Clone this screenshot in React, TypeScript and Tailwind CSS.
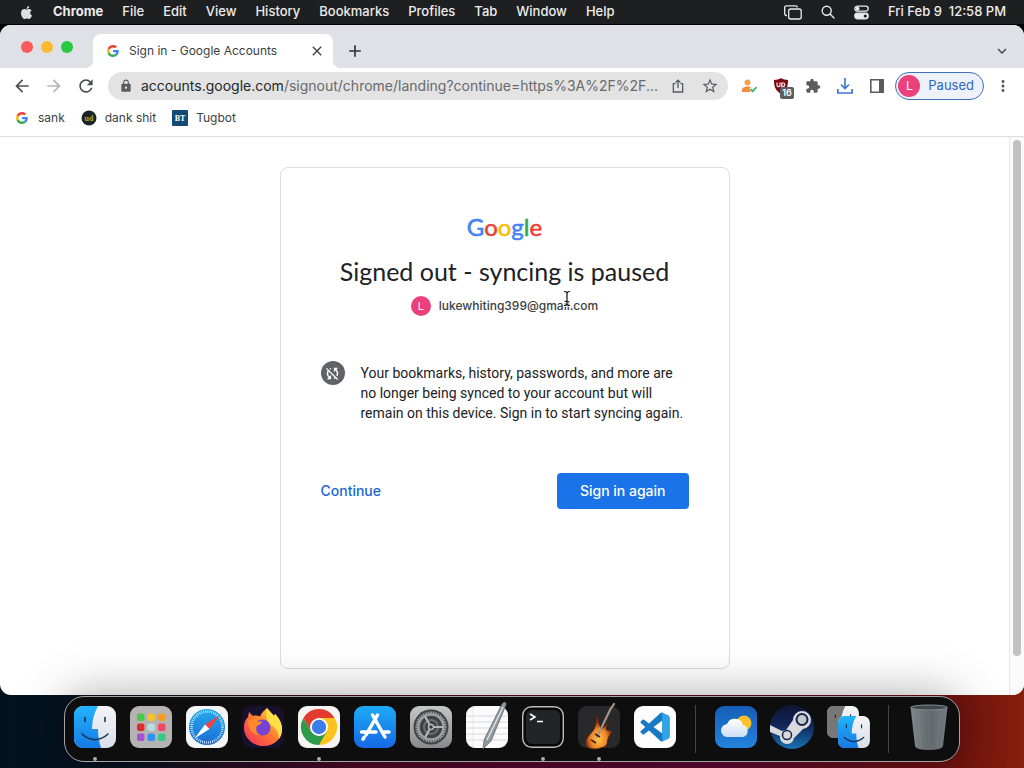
import type { ReactNode } from 'react'
import { FaApple } from 'react-icons/fa'
import {
  MdAdd,
  MdArrowBack,
  MdArrowForward,
  MdClose,
  MdExtension,
  MdKeyboardArrowDown,
  MdLock,
  MdMoreVert,
  MdRefresh,
  MdStarBorder,
  MdSyncDisabled,
} from 'react-icons/md'

const MENUS = ['File', 'Edit', 'View', 'History', 'Bookmarks', 'Profiles', 'Tab', 'Window', 'Help']

function GoogleG({ className }: { className?: string }) {
  return (
    <svg className={className} viewBox="0 0 48 48">
      <path fill="#EA4335" d="M24 9.5c3.54 0 6.71 1.22 9.21 3.6l6.85-6.85C35.9 2.38 30.47 0 24 0 14.62 0 6.51 5.38 2.56 13.22l7.98 6.19C12.43 13.72 17.74 9.5 24 9.5z" />
      <path fill="#4285F4" d="M46.98 24.55c0-1.57-.15-3.09-.38-4.55H24v9.02h12.94c-.58 2.96-2.26 5.48-4.78 7.18l7.73 6c4.51-4.18 7.09-10.36 7.09-17.65z" />
      <path fill="#FBBC05" d="M10.53 28.59c-.48-1.45-.76-2.99-.76-4.59s.27-3.14.76-4.59l-7.98-6.19C.92 16.46 0 20.12 0 24c0 3.88.92 7.54 2.56 10.78l7.97-6.19z" />
      <path fill="#34A853" d="M24 48c6.48 0 11.93-2.13 15.89-5.81l-7.73-6c-2.15 1.45-4.92 2.3-8.16 2.3-6.26 0-11.57-4.22-13.47-9.91l-7.98 6.19C6.51 42.62 14.62 48 24 48z" />
    </svg>
  )
}

function MenuBar() {
  return (
    <header className="flex h-[25px] shrink-0 items-center border-b border-black bg-[#1e1f21] pl-[19px] pr-[18px] text-[13px] font-medium text-[#ececec]">
      <button aria-label="Apple menu" className="mr-[19px] text-[#dedede]">
        <FaApple className="size-[15px]" />
      </button>
      <nav className="flex flex-1 items-center gap-[19px]">
        <button className="font-bold">Chrome</button>
        {MENUS.map((m) => (
          <button key={m}>{m}</button>
        ))}
      </nav>
      <div className="flex items-center gap-[19px]">
        <button aria-label="Stage Manager">
          <svg className="h-[15px] w-[18px]" viewBox="0 0 18 15" fill="none" stroke="currentColor" strokeWidth="1.3">
            <path d="M3 10.5H2.5A1.8 1.8 0 0 1 .7 8.7V2.6A1.8 1.8 0 0 1 2.5.8h9A1.8 1.8 0 0 1 13.3 2.6" />
            <rect x="4.7" y="4" width="12.5" height="10" rx="2" />
          </svg>
        </button>
        <button aria-label="Spotlight">
          <svg className="size-[14px]" viewBox="0 0 14 14" fill="none" stroke="currentColor" strokeWidth="1.4">
            <circle cx="5.7" cy="5.7" r="4.5" />
            <path d="M9 9l4 4" strokeLinecap="round" />
          </svg>
        </button>
        <button aria-label="Control Center">
          <svg className="size-[15px]" viewBox="0 0 15 15" fill="none" stroke="currentColor" strokeWidth="1.3">
            <rect x=".8" y="1.2" width="13.4" height="5" rx="2.5" />
            <circle cx="3.6" cy="3.7" r="1.3" fill="currentColor" />
            <rect x=".8" y="8.2" width="13.4" height="5.6" rx="2.8" fill="currentColor" />
            <circle cx="11.3" cy="11" r="1.6" fill="#1e1f21" stroke="none" />
          </svg>
        </button>
        <time className="whitespace-pre">Fri Feb 9  12:58 PM</time>
      </div>
    </header>
  )
}

function TabStrip() {
  return (
    <div className="flex h-[43px] shrink-0 items-end bg-[#dee1e6] pl-[21px] pr-[13px]">
      <div className="flex h-full items-center gap-2 pr-5">
        <button aria-label="Close window" className="size-3 rounded-full bg-[#fb5b5a]" />
        <button aria-label="Minimize window" className="size-3 rounded-full bg-[#fcbb2e]" />
        <button aria-label="Zoom window" className="size-3 rounded-full bg-[#29c840]" />
      </div>
      <div className="relative flex h-[34px] w-60 items-center rounded-t-lg bg-white pl-[14px] pr-2 text-xs text-[#3c4043] before:absolute before:bottom-0 before:-left-2 before:size-2 before:bg-[radial-gradient(circle_at_0_0,transparent_8px,white_8px)] after:absolute after:bottom-0 after:-right-2 after:size-2 after:bg-[radial-gradient(circle_at_100%_0,transparent_8px,white_8px)]">
        <GoogleG className="mr-[10px] size-3" />
        <span className="flex-1 whitespace-nowrap">Sign in - Google Accounts</span>
        <button aria-label="Close tab">
          <MdClose className="size-4" />
        </button>
      </div>
      <button aria-label="New tab" className="ml-3 flex h-[34px] items-center text-[#303236]">
        <MdAdd className="size-5" />
      </button>
      <button aria-label="Search tabs" className="ml-auto flex h-[34px] items-center text-[#45484c]">
        <MdKeyboardArrowDown className="size-[18px]" />
      </button>
    </div>
  )
}

function Toolbar() {
  return (
    <div className="flex h-9 shrink-0 items-center bg-white px-3 text-[#5a5c60]">
      <div className="flex items-center gap-3">
        <button aria-label="Back"><MdArrowBack className="size-5 text-[#4e5054]" /></button>
        <button aria-label="Forward"><MdArrowForward className="size-5 text-[#b5b6b8]" /></button>
        <button aria-label="Reload"><MdRefresh className="size-5 text-[#4e5054]" /></button>
      </div>
      <div className="ml-3 flex h-7 min-w-0 flex-1 items-center rounded-full bg-[#e3e3e3] pl-[11px] pr-[9px] text-sm">
        <MdLock className="mr-2 size-[14px] shrink-0" />
        <label htmlFor="address" className="text-[#25272a]">accounts.google.com</label>
        <input
          id="address"
          type="text"
          className="min-w-0 flex-1 bg-transparent text-[#68696c] outline-none"
          defaultValue="/signout/chrome/landing?continue=https%3A%2F%2F..."
        />
        <button aria-label="Share this page" className="ml-3">
          <svg className="size-[14px]" viewBox="0 0 14 14" fill="none" stroke="currentColor" strokeWidth="1.3">
            <path d="M4.5 4.7H2.3V13H11.7V4.7H9.5M7 9V1.2M4.6 3.5L7 1.1l2.4 2.4" />
          </svg>
        </button>
        <button aria-label="Bookmark this tab" className="ml-4">
          <MdStarBorder className="size-[18px]" />
        </button>
      </div>
      <div className="ml-[13px] flex items-center gap-4">
        <button aria-label="Account extension">
          <svg className="size-4" viewBox="0 0 16 16">
            <circle cx="6.5" cy="4.5" r="3" fill="#f8a04f" />
            <path fill="#f28a3c" d="M1 14v-2c0-2 2-3.500 5.500-3.500 1.500 0 2.500.3 3.500.8L8.500 11l1.500 3z" />
            <path d="M9.500 11l2.200 2.300L15.500 9" fill="none" stroke="#2eb45a" strokeWidth="1.700" />
          </svg>
        </button>
        <button aria-label="uBlock Origin, 16 blocked" className="relative size-4">
          <svg className="size-4" viewBox="0 0 16 16">
            <path fill="#800611" d="M8 0c2 1.400 4.500 1.900 7 2 0 6.500-1 10-7 14C2 12 1 8.500 1 2 3.500 1.900 6 1.400 8 0z" />
            <path fill="none" stroke="#fff" strokeWidth="1.1" d="M4 4.5v2.7a1.5 1.5 0 0 0 3 0V4.5M8.8 10V5h1.4a1.6 1.6 0 0 1 0 3.3H8.8" />
          </svg>
          <span className="absolute left-[7px] top-[9px] rounded-xs bg-[#5c5d60] px-[2px] text-[9px] font-semibold leading-[12px] text-white">16</span>
        </button>
        <button aria-label="Extensions"><MdExtension className="size-4" /></button>
        <button aria-label="Downloads" className="text-[#3f79d8]">
          <svg className="size-4" viewBox="0 0 16 16" fill="none" stroke="currentColor" strokeWidth="1.7">
            <path d="M8 0v10M4 6.5l4 4 4-4M.9 11v4h14.2v-4" />
          </svg>
        </button>
        <button aria-label="Side panel">
          <svg className="size-4" viewBox="0 0 16 16">
            <path fill="currentColor" fillRule="evenodd" d="M1 1h14v14H1zM2.6 2.6v10.8H10V2.6z" />
          </svg>
        </button>
      </div>
      <button className="ml-[10px] flex h-7 items-center gap-2 rounded-full border border-[#3f70b8] bg-[#edf2fa] pl-[2px] pr-[9px] text-[13px] text-[#2f67c0]">
        <span className="flex size-[22px] items-center justify-center rounded-full bg-[#ec407a] text-xs text-white">L</span>
        Paused
      </button>
      <button aria-label="Chrome menu" className="ml-[10px]"><MdMoreVert className="size-[18px]" /></button>
    </div>
  )
}

function Bookmarks() {
  return (
    <nav className="flex h-[33px] shrink-0 items-start gap-4 border-b border-[#dddee0] bg-white pl-4 pt-[5px] text-xs text-[#3c4043]">
      <a href="#sank" className="flex h-[18px] items-center gap-[10px]">
        <GoogleG className="size-3" />
        sank
      </a>
      <a href="#dank" className="flex h-[18px] items-center gap-2">
        <svg className="size-4" viewBox="0 0 16 16">
          <circle cx="8" cy="8" r="7.500" fill="#1b2426" />
          <text x="8" y="11" textAnchor="middle" fontSize="8" fontWeight="700" fill="#a8b02e" fontFamily="Liberation Serif, serif">ud</text>
        </svg>
        dank shit
      </a>
      <a href="#tugbot" className="flex h-[18px] items-center gap-2">
        <svg className="size-4" viewBox="0 0 16 16">
          <rect width="16" height="16" rx="1" fill="#134b74" />
          <text x="8" y="11" textAnchor="middle" fontSize="8" fontWeight="700" fill="#fff" fontFamily="Liberation Serif, serif">BT</text>
        </svg>
        Tugbot
      </a>
    </nav>
  )
}

function TextCursor() {
  return (
    <svg className="absolute right-[26px] -top-1.5 h-[17px] w-[10px]" viewBox="0 0 10 17" fill="none">
      <path stroke="#fff" strokeWidth="3" d="M2 1.5q3 0 3 2v10q0 2-3 2M8 1.5q-3 0-3 2v10q0 2 3 2" />
      <path stroke="#111" strokeWidth="1.2" d="M2 1.5q3 0 3 2v10q0 2-3 2M8 1.5q-3 0-3 2v10q0 2 3 2M3 11.5h4" />
    </svg>
  )
}

function SignedOutCard() {
  return (
    <section className="mx-auto mt-[30px] flex h-[502px] w-full max-w-[450px] shrink-0 flex-col rounded-lg border border-[#dadce0] px-10 pt-[43px] text-[#202124]">
      <div aria-label="Google" className="text-center font-['Lato',sans-serif] text-2xl leading-8 [-webkit-text-stroke:0.6px]">
        <span className="text-[#4285f4]">G</span>
        <span className="text-[#ea4335]">o</span>
        <span className="text-[#fbbc05]">o</span>
        <span className="text-[#4285f4]">g</span>
        <span className="text-[#34a853]">l</span>
        <span className="text-[#ea4335]">e</span>
      </div>
      <h1 className="mt-3 text-center font-['Lato',sans-serif] text-[25px] leading-8 whitespace-nowrap">Signed out - syncing is paused</h1>
      <div className="mt-[9px] flex items-center justify-center gap-2">
        <span className="flex size-5 items-center justify-center rounded-full bg-[#ec407a] text-[11px] text-white">L</span>
        <span className="relative text-xs font-medium leading-5 text-[#3c4043]">
          lukewhiting399@gmail.com
          <TextCursor />
        </span>
      </div>
      <div className="mt-[45px] flex items-start gap-4">
        <span className="flex size-6 shrink-0 items-center justify-center rounded-full bg-[#5f6368] text-white">
          <MdSyncDisabled className="size-[17px]" />
        </span>
        <p className="pt-0.5 font-['Roboto',sans-serif] text-sm leading-5">
          Your bookmarks, history, passwords, and more are no longer being synced to your account but will remain on this device. Sign in to start syncing again.
        </p>
      </div>
      <div className="mt-[50px] flex items-center justify-between text-sm font-medium">
        <button className="text-[#1a66d0]">Continue</button>
        <button className="h-9 rounded bg-[#1a73e8] px-[23px] text-white">Sign in again</button>
      </div>
    </section>
  )
}

function FinderFace() {
  return (
    <>
      <rect width="42" height="42" rx="9" fill="url(#finderLight)" />
      <path fill="url(#finderBlue)" d="M9 0h15c-4 7-6 15-6 23h6c0 7 1 13 3 19H9a9 9 0 0 1-9-9V9a9 9 0 0 1 9-9z" />
      <path d="M11 11.5v4M31 11.5v4" stroke="#173450" strokeWidth="1.6" strokeLinecap="round" />
      <path d="M8 28c8 7.500 18 7.500 26 0" fill="none" stroke="#173450" strokeWidth="1.5" strokeLinecap="round" />
    </>
  )
}

const LAUNCHPAD = ['#45ca49', '#f6c12f', '#f59c24', '#dc2c2e', '#b9dcdc', '#ef4967', '#a451d3', '#2d93ee', '#38c987']

const GEAR_TEETH = Array.from({ length: 36 }, (_, i) => i * 10)

interface DockApp {
  name: string
  running?: boolean
  icon: ReactNode
}

const APPS: DockApp[] = [
  { name: 'Finder', running: true, icon: <FinderFace /> },
  {
    name: 'Launchpad',
    icon: (
      <>
        <rect width="42" height="42" rx="9" fill="#b4b2b3" />
        {LAUNCHPAD.map((c, i) => (
          <rect key={c} x={7 + (i % 3) * 10.5} y={7.5 + Math.floor(i / 3) * 10} width="7.5" height="7.5" rx="2" fill={c} />
        ))}
      </>
    ),
  },
  {
    name: 'Safari',
    icon: (
      <>
        <rect width="42" height="42" rx="9" fill="#f4f5f6" />
        <circle cx="21" cy="21" r="18" fill="url(#safari)" />
        <circle cx="21" cy="21" r="15.5" fill="none" stroke="#fff" strokeWidth="2.5" strokeDasharray=".7 1.33" />
        <path fill="#f5413b" d="M33.5 9.5 19 18.5l4.5 4.5z" />
        <path fill="#fff" d="M8.5 32.5 19 18.5l4.5 4.5z" />
      </>
    ),
  },
  {
    name: 'Firefox',
    icon: (
      <>
        <rect width="42" height="42" rx="9" fill="#17102e" />
        <path
          fill="url(#firefox)"
          d="M25 2c2 3 5 5 7 8l1-2c4 4 7 9 7 15 0 10-8 17-18.500 17C11 40 2 32 2 22c0-5 1-8 4-11l1-5 4 4c2-.8 5-.5 7 .5 1-3 4-6 7-8.500z"
        />
        <path fill="#ffdf46" d="M25 2c2 3 5 5 7 8l1-2c4 4 7 9 7 15 0 4-1 7-3 10 0-8-4-11-8-14s-6-9-4-17z" />
        <circle cx="20.5" cy="21.500" r="8" fill="#7542d6" />
        <path fill="#ff8a2b" d="M6 15c4-3 8-4 12-3-2 1-3 2-3 3.500h5c0 2-3 3-5 4.500-2 4 0 8 4 9-8 1-13-6-13-14z" />
      </>
    ),
  },
  {
    name: 'Google Chrome',
    running: true,
    icon: (
      <>
        <rect width="42" height="42" rx="9" fill="#f5f4f2" />
        <path fill="#e33b2e" d="M21 21 5.400 12A18 18 0 0 1 36.600 12z" />
        <path fill="#fcc31e" d="M21 21V12h15.600A18 18 0 0 1 21 39z" />
        <path fill="#2c9c4b" d="M21 39A18 18 0 0 1 5.400 12l7.800 13.500L21 30l7.800-4.500z" />
        <path fill="#e33b2e" d="m5.400 12 7.800 13.500L21 21V12z" />
        <circle cx="21" cy="21" r="9" fill="#fff" />
        <circle cx="21" cy="21" r="7.2" fill="#3b7de9" />
      </>
    ),
  },
  {
    name: 'App Store',
    icon: (
      <>
        <rect width="42" height="42" rx="9" fill="url(#appStore)" />
        <path d="M23.5 9 12 29M18.5 9 31 31M7.5 26H22M29 26h6M10 31.5l-1 1.7" fill="none" stroke="#fff" strokeWidth="3.5" strokeLinecap="round" />
      </>
    ),
  },
  {
    name: 'System Settings',
    icon: (
      <>
        <rect width="42" height="42" rx="9" fill="url(#settings)" />
        <circle cx="21" cy="21" r="17.5" fill="#3f4243" />
        {GEAR_TEETH.map((a) => (
          <path key={a} d="M21 5.5v2" stroke="#a5aaaa" strokeWidth="1.5" transform={`rotate(${a} 21 21)`} />
        ))}
        <circle cx="21" cy="21" r="12.5" fill="none" stroke="#9ca1a1" strokeWidth="2.5" />
        <circle cx="21" cy="21" r="7" fill="none" stroke="#6a6f70" strokeWidth="2" />
        <path d="M21 21h12M21 21l-6-10.5M21 21l-6 10.5" stroke="#b2b6b6" strokeWidth="2.2" />
        <circle cx="21" cy="21" r="2.500" fill="#35383a" stroke="#b2b6b6" strokeWidth="1.5" />
      </>
    ),
  },
  {
    name: 'TextEdit',
    icon: (
      <>
        <rect width="42" height="42" rx="9" fill="#fbfbfb" />
        <path d="M0 10h42M0 16h42M0 22h42M0 28h42M0 34h42" stroke="#ccd0d3" strokeWidth=".8" />
        <path d="M7 0v42" stroke="#e7dfd8" strokeWidth=".7" />
        <path fill="#90999f" stroke="#555c61" strokeWidth=".7" d="M36-2c2-3 5-2 4 1L25 35l-8 8 1-9z" />
        <path d="M37 1 21 34" stroke="#e4e8ea" strokeWidth="1.3" />
      </>
    ),
  },
  {
    name: 'Terminal',
    running: true,
    icon: (
      <>
        <rect x=".7" y=".7" width="40.6" height="40.6" rx="9" fill="#080808" stroke="#bcbcbc" strokeWidth="1.4" />
        <rect x="4" y="4" width="34" height="34" rx="6" fill="#222425" />
        <path d="m8 8 5 3-5 3M15 15.5h6" fill="none" stroke="#fff" strokeWidth="1.6" />
      </>
    ),
  },
  {
    name: 'GarageBand',
    running: true,
    icon: (
      <>
        <rect width="42" height="42" rx="9" fill="#29282a" />
        <path fill="url(#guitar)" stroke="#47200f" strokeWidth=".8" d="M20 9c-3 3-1 9-4 14-2 4-6 6-8 11-2 6 2 9 8 9 5 0 6-1 10-2 4-2 3-5 4-8 1-4 4-5 4-9-2 1-6 1-6-2l3-6-7 7c-3-3-4-9-4-14z" />
        <path d="M19 31 32 4l4-6" stroke="#a89488" strokeWidth="2.2" fill="none" strokeLinecap="round" />
        <path d="m13 34 5 3M17 28l5 3" stroke="#45200e" strokeWidth="1.5" />
      </>
    ),
  },
  {
    name: 'Visual Studio Code',
    icon: (
      <>
        <rect width="42" height="42" rx="9" fill="#fdfdfd" />
        <g transform="translate(6.5 6.5) scale(1.21)">
          <path fill="#1879c4" d="M23.15 2.587 18.21.21a1.494 1.494 0 0 0-1.705.29l-9.46 8.63-4.12-3.128a.999.999 0 0 0-1.276.057L.327 7.261A1 1 0 0 0 .326 8.74L3.899 12 .326 15.26a1 1 0 0 0 .001 1.479L1.65 17.94a.999.999 0 0 0 1.276.057l4.12-3.128 9.46 8.63a1.492 1.492 0 0 0 1.704.29l4.942-2.377A1.5 1.5 0 0 0 24 20.06V3.939a1.5 1.5 0 0 0-.85-1.352zm-5.146 14.861L10.826 12l7.178-5.448v10.896z" />
          <path fill="#33a3e8" d="M18 .2 23.15 2.6a1.5 1.5 0 0 1 .85 1.35v16.1a1.5 1.5 0 0 1-.85 1.35L18 23.8z" />
        </g>
      </>
    ),
  },
]

const RECENTS: DockApp[] = [
  {
    name: 'Weather',
    icon: (
      <>
        <rect width="42" height="42" rx="9" fill="url(#weather)" />
        <circle cx="29" cy="17" r="7.5" fill="#fcc02c" />
        <path fill="url(#cloud)" d="M13 31a6.500 6.500 0 0 1-1-13 8.500 8.500 0 0 1 16 1 6.200 6.200 0 0 1 0 12z" />
      </>
    ),
  },
  {
    name: 'Steam',
    icon: (
      <>
        <circle cx="21" cy="21" r="22" fill="url(#steam)" />
        <path fill="#d8dade" d="M-1 19v7l10 4a7 7 0 0 0 14 2l9-9a9 9 0 1 0-10-9l-7 10-4 1z" />
        <circle cx="31" cy="13.5" r="5.5" fill="#c4c7cd" stroke="#172349" strokeWidth="2" />
        <circle cx="16" cy="29" r="4.5" fill="none" stroke="#172349" strokeWidth="1.5" />
      </>
    ),
  },
  {
    name: 'Migration Assistant',
    icon: (
      <>
        <g transform="scale(.76)">
          <FinderFace />
          <path fill="#777" d="M9 0h15c-4 7-6 15-6 23h6c0 7 1 13 3 19H9a9 9 0 0 1-9-9V9a9 9 0 0 1 9-9z" />
          <path d="M11 11.500v4" stroke="#222" strokeWidth="1.600" />
        </g>
        <g transform="translate(11 10) scale(.76)"><FinderFace /></g>
      </>
    ),
  },
]

const TRASH: DockApp = {
  name: 'Trash',
  icon: (
    <>
      <path fill="url(#trash)" d="M2.5 1h37L35 40q-1 4-14 4T7 40z" />
      <ellipse cx="21" cy="1.5" rx="18.5" ry="2.5" fill="#41474a" stroke="#858b8e" strokeWidth="1" />
      <path d="M10 6l3 35M32 6l-3 35M21 6v36" stroke="#91989b" strokeWidth=".6" opacity=".4" />
    </>
  ),
}

// Shared by every dock icon, so the ids stay unique on the page
function Gradients() {
  return (
    <svg className="absolute size-0" aria-hidden="true">
      <defs>
        <linearGradient id="finderBlue" x2="0" y2="1"><stop stopColor="#23b4fb" /><stop offset="1" stopColor="#1679e6" /></linearGradient>
        <linearGradient id="finderLight" x2="0" y2="1"><stop stopColor="#f3f4f7" /><stop offset="1" stopColor="#d9dfe9" /></linearGradient>
        <linearGradient id="safari" x2="0" y2="1"><stop stopColor="#23aaf0" /><stop offset="1" stopColor="#1a6cd2" /></linearGradient>
        <linearGradient id="firefox" x1="1" x2="0" y2="1"><stop offset=".1" stopColor="#ffda3c" /><stop offset=".5" stopColor="#ff7730" /><stop offset="1" stopColor="#ef2960" /></linearGradient>
        <linearGradient id="appStore" x2="0" y2="1"><stop stopColor="#1dabf7" /><stop offset="1" stopColor="#1668e5" /></linearGradient>
        <linearGradient id="settings" x2="0" y2="1"><stop stopColor="#c3c8c6" /><stop offset="1" stopColor="#878b8b" /></linearGradient>
        <radialGradient id="guitar" cy=".7"><stop stopColor="#ffc64b" /><stop offset=".6" stopColor="#ec852b" /><stop offset="1" stopColor="#8c2e14" /></radialGradient>
        <linearGradient id="weather" x2="0" y2="1"><stop stopColor="#155eb8" /><stop offset="1" stopColor="#2383db" /></linearGradient>
        <linearGradient id="cloud" x2="0" y2="1"><stop stopColor="#fff" /><stop offset="1" stopColor="#cedff5" /></linearGradient>
        <linearGradient id="steam" x2="0" y2="1"><stop stopColor="#101533" /><stop offset=".5" stopColor="#12275a" /><stop offset="1" stopColor="#1974b7" /></linearGradient>
        <linearGradient id="trash"><stop stopColor="#82888b" /><stop offset=".5" stopColor="#626a6e" /><stop offset="1" stopColor="#747a7d" /></linearGradient>
      </defs>
    </svg>
  )
}

function DockIcon({ app }: { app: DockApp }) {
  return (
    <button aria-label={app.name} className="flex h-full flex-col items-center pt-[9px]">
      <svg className="size-[42px] overflow-visible" viewBox="0 0 42 42">{app.icon}</svg>
      {app.running && <span className="mt-[9px] size-1 rounded-full bg-[#a8a8a8]" />}
    </button>
  )
}

function Dock() {
  return (
    <footer className="relative flex h-[73px] shrink-0 justify-center pt-[1px]">
      <Gradients />
      <div className="flex h-[66px] items-center gap-[14px] rounded-[20px] border border-[#a5a5a5] bg-[#0e0e0e] px-[9px] shadow-[0_0_48px_rgba(0,0,0,0.35)]">
        {APPS.map((app) => <DockIcon key={app.name} app={app} />)}
        <span className="mx-[5px] h-12 w-px bg-[#454545]" />
        {RECENTS.map((app) => <DockIcon key={app.name} app={app} />)}
        <span className="mx-[5px] h-12 w-px bg-[#454545]" />
        <DockIcon app={TRASH} />
      </div>
    </footer>
  )
}

export default function App() {
  return (
    <div className="flex h-screen flex-col overflow-hidden bg-[linear-gradient(90deg,#02131f,#071321_12%,#4d0826_35%,#5a0930_70%,#6c1010_92%,#85200c)] font-['Inter',sans-serif]">
      <MenuBar />
      <div className="flex min-h-0 flex-1 flex-col bg-[linear-gradient(#000_50%,transparent_50%)]">
        <div className="flex min-h-0 flex-1 flex-col overflow-hidden rounded-[11px] bg-white">
          <TabStrip />
          <Toolbar />
          <Bookmarks />
          <div className="flex min-h-0 flex-1">
            <main className="flex min-w-0 flex-1 flex-col">
              <SignedOutCard />
            </main>
            <div className="w-[15px] shrink-0 border-l border-[#e8e8e8] bg-[#fafafa] px-[3px] pt-[3px] pb-[39px]">
              <div className="h-full rounded-full bg-[#c1c1c1]" />
            </div>
          </div>
        </div>
      </div>
      <Dock />
    </div>
  )
}
